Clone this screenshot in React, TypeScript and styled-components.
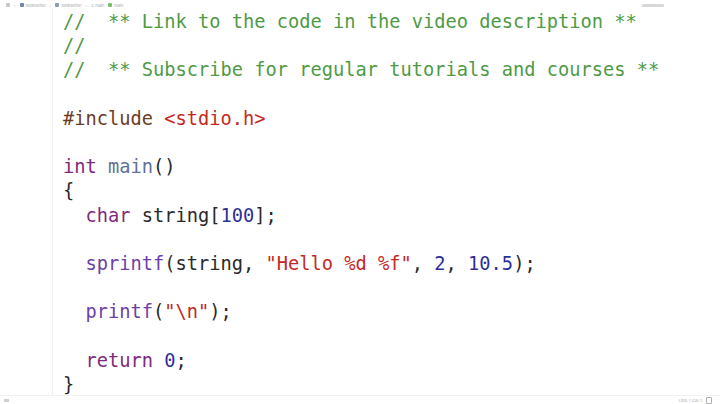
import React from "react";
import styled, { createGlobalStyle } from "styled-components";

const Global = createGlobalStyle`
  html, body { margin: 0; padding: 0; background: #ffffff; }
  #root { width: 720px; height: 404px; overflow: hidden; }
`;

const Page = styled.div`
  width: 720px;
  height: 404px;
  display: flex;
  flex-direction: column;
  background: #ffffff;
  font-family: "DejaVu Sans Mono", "Liberation Mono", monospace;
`;

const TopBar = styled.div`
  height: 10px;
  display: flex;
  align-items: center;
  gap: 4px;
  padding: 0 6px;
  font-family: "Inter", "Liberation Sans", sans-serif;
  font-size: 4px;
  color: #a8a8a8;
`;

const Crumb = styled.span<{ $tint?: string }>`
  display: flex;
  align-items: center;
  gap: 2px;
  &::before {
    content: "";
    width: 4px;
    height: 4px;
    border-radius: 1px;
    background: ${(p) => p.$tint || "#9aa3b0"};
  }
`;

const TopRight = styled.div`
  margin-left: auto;
  margin-right: 50px;
  width: 22px;
  height: 3px;
  background: #d8d8d8;
  border-radius: 1px;
`;

const Editor = styled.div`
  flex: 1;
  display: flex;
  min-height: 0;
`;

const Gutter = styled.div`
  width: 52px;
  border-right: 1px solid #f0f0f0;
`;

const Code = styled.pre`
  margin: 0;
  padding: 0 0 0 10px;
  font-family: "DejaVu Sans Mono", "Liberation Mono", monospace;
  font-size: 18.7px;
  line-height: 24.2px;
  color: #2a2a2a;
  letter-spacing: 0;
`;

const Line = styled.div`
  height: 24.2px;
  white-space: pre;
`;

const Tok = styled.span<{ $k: string }>`
  color: ${(p) =>
    ({
      comment: "#4f9a45",
      pre: "#6b3c24",
      str: "#c4291f",
      kw: "#7e2a7c",
      fn: "#5f7196",
      call: "#6e3fa8",
      num: "#2e2f96",
      plain: "#2a2a2a",
    } as Record<string, string>)[p.$k]};
`;

const StatusBar = styled.div`
  height: 8px;
  border-top: 1px solid #f2f2f2;
  display: flex;
  align-items: center;
  justify-content: flex-end;
  gap: 4px;
  padding: 0 8px;
  font-family: "Inter", "Liberation Sans", sans-serif;
  font-size: 4px;
  color: #a8a8a8;
`;

const LeftDot = styled.span`
  margin-right: auto;
  margin-left: -4px;
  width: 5px;
  height: 3px;
  background: #d0d0d0;
`;

const StatusIcon = styled.span`
  width: 4px;
  height: 5px;
  border: 1px solid #b0b0b0;
  border-radius: 1px;
`;

type T = [string, string];

const lines: T[][] = [
  [["comment", "//  ** Link to the code in the video description **"]],
  [["comment", "//"]],
  [["comment", "//  ** Subscribe for regular tutorials and courses **"]],
  [],
  [["pre", "#include "], ["str", "<stdio.h>"]],
  [],
  [["kw", "int"], ["plain", " "], ["fn", "main"], ["plain", "()"]],
  [["plain", "{"]],
  [["plain", "  "], ["kw", "char"], ["plain", " string["], ["num", "100"], ["plain", "];"]],
  [],
  [
    ["plain", "  "],
    ["call", "sprintf"],
    ["plain", "(string, "],
    ["str", "\"Hello %d %f\""],
    ["plain", ", "],
    ["num", "2"],
    ["plain", ", "],
    ["num", "10.5"],
    ["plain", ");"],
  ],
  [],
  [["plain", "  "], ["call", "printf"], ["plain", "("], ["str", "\"\\n\""], ["plain", ");"]],
  [],
  [["plain", "  "], ["kw", "return"], ["plain", " "], ["num", "0"], ["plain", ";"]],
  [["plain", "}"]],
];

export default function App() {
  return (
    <Page>
      <Global />
      <TopBar>
        <Crumb $tint="#c8c8c8" />
        <span>›</span>
        <Crumb $tint="#6f86a8">Newsletter</Crumb>
        <span>›</span>
        <Crumb $tint="#8c9bb0">Newsletter</Crumb>
        <span>›</span>
        <span>C main</span>
        <Crumb $tint="#7dbb6a">main</Crumb>
        <TopRight />
      </TopBar>
      <Editor>
        <Gutter />
        <Code>
          {lines.map((l, i) => (
            <Line key={i}>
              {l.map(([k, t], j) => (
                <Tok key={j} $k={k}>
                  {t}
                </Tok>
              ))}
            </Line>
          ))}
        </Code>
      </Editor>
      <StatusBar>
        <LeftDot />
        <span>Line: 1  Col: 1</span>
        <StatusIcon />
      </StatusBar>
    </Page>
  );
}
